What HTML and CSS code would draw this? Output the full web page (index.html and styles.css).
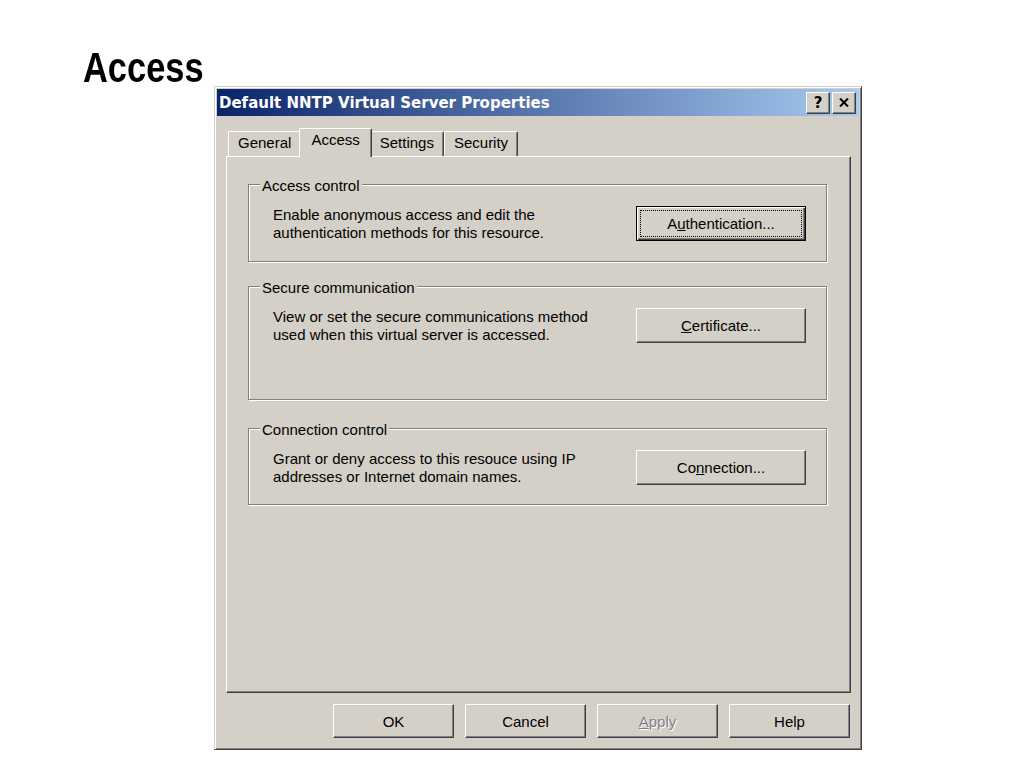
FILE: index.html
```html
<!DOCTYPE html>
<html>
<head>
  <meta charset="utf-8" />
  <title>Access</title>
  <link rel="stylesheet" href="styles.css">
</head>
<body>
<div class="slide">
  <h1 class="slide-title">Access</h1>

  <div class="dialog">
    <div class="titlebar">
      <span class="titlebar-text">Default NNTP Virtual Server Properties</span>
      <div class="caption-buttons">
        <span class="caption-btn caption-help">?</span>
        <span class="caption-btn">
          <svg width="10" height="9" viewBox="0 0 10 9">
            <path d="M1 0.5 L9 8.5 M9 0.5 L1 8.5" stroke="#000" stroke-width="2" fill="none" />
          </svg>
        </span>
      </div>
    </div>

    <div class="dialog-body">
      <div class="tabs">
        <div class="tab">General</div>
        <div class="tab tab-active">Access</div>
        <div class="tab">Settings</div>
        <div class="tab">Security</div>
      </div>

      <div class="tab-panel">
        <div class="group group-access">
          <div class="group-label">Access control</div>
          <div class="group-row">
            <p class="group-text">Enable anonymous access and edit the<br>authentication methods for this resource.</p>
            <button class="btn btn-default"><span class="focus-ring">A<u>u</u>thentication...</span></button>
          </div>
        </div>

        <div class="group group-secure">
          <div class="group-label">Secure communication</div>
          <div class="group-row">
            <p class="group-text">View or set the secure communications method<br>used when this virtual server is accessed.</p>
            <button class="btn"><u>C</u>ertificate...</button>
          </div>
        </div>

        <div class="group group-connection">
          <div class="group-label">Connection control</div>
          <div class="group-row">
            <p class="group-text">Grant or deny access to this resouce using IP<br>addresses or Internet domain names.</p>
            <button class="btn">Co<u>n</u>nection...</button>
          </div>
        </div>
      </div>

      <div class="dialog-buttons">
        <button class="btn btn-wide">OK</button>
        <button class="btn btn-wide">Cancel</button>
        <button class="btn btn-wide btn-disabled"><u>A</u>pply</button>
        <button class="btn btn-wide">Help</button>
      </div>
    </div>
  </div>
</div>
</body>
</html>
```

FILE: styles.css
```css
body {
  margin: 0;
  padding: 0;
  background: #fff;
  font-family: "Liberation Sans", Arial, sans-serif;
}
.slide {
  width: 1024px;
  height: 768px;
  overflow: hidden;
  padding-top: 49px;
  box-sizing: border-box;
}
.slide-title {
  width: fit-content;
  margin: 0 0 0 83px;
  font-family: "Liberation Sans", Arial, sans-serif;
  font-size: 42px;
  line-height: 37px;
  font-weight: 700;
  color: #000;
  /* no narrow face installed, so squeeze the regular one */
  transform: scaleX(0.82);
  transform-origin: left top;
}

/* window frame */
.dialog {
  box-sizing: border-box;
  width: 648px;
  margin-left: 214px;
  padding: 2px;
  background: #d4d0c8;
  border: 1px solid;
  border-color: #d4d0c8 #404040 #404040 #d4d0c8;
  box-shadow: inset 1px 1px #fff, inset -1px -1px #808080;
}
.titlebar {
  height: 27px;
  display: flex;
  align-items: center;
  justify-content: space-between;
  padding: 0 3px 0 2px;
  background: linear-gradient(to right, #0a246a, #a6caf0);
}
.titlebar-text {
  color: #fff;
  font-family: "DejaVu Sans", sans-serif;
  font-weight: 700;
  font-size: 15px;
  line-height: 18px;
  white-space: nowrap;
}
.caption-buttons {
  display: flex;
  gap: 2px;
}
.caption-btn {
  box-sizing: border-box;
  width: 24px;
  height: 22px;
  display: flex;
  align-items: center;
  justify-content: center;
  background: #d4d0c8;
  border: 1px solid;
  border-color: #fff #404040 #404040 #fff;
  box-shadow: inset -1px -1px #808080;
}
.caption-help {
  font-family: "DejaVu Sans", sans-serif;
  font-weight: 700;
  font-size: 15px;
  color: #000;
}

.dialog-body {
  padding: 12px 8px 9px 9px;
  font-size: 15px;
  line-height: 18px;
  color: #000;
}

/* tabs */
.tabs {
  display: flex;
  align-items: flex-end;
  height: 28px;
  padding-left: 2px;
}
.tab {
  box-sizing: border-box;
  height: 25px;
  padding: 2px 9px 0 9px;
  border: 1px solid;
  border-bottom: 0;
  border-color: #fff #404040 #fff #fff;
  border-radius: 2px 2px 0 0;
  box-shadow: inset -1px 0 #808080;
  white-space: nowrap;
}
.tab-active {
  position: relative;
  z-index: 1;
  height: 29px;
  margin: 0 -2px -1px -2px;
  padding: 2px 11px 0 11px;
  background: #d4d0c8;
}

.tab-panel {
  box-sizing: border-box;
  height: 537px;
  padding: 27px 23px 0 21px;
  border: 1px solid;
  border-color: #fff #404040 #404040 #fff;
  box-shadow: inset -1px -1px #808080;
}

/* group boxes */
.group {
  box-sizing: border-box;
  border: 1px solid #808080;
  box-shadow: inset 1px 1px #fff, 1px 1px #fff;
}
.group-access { height: 78px; }
.group-secure { height: 114px; margin-top: 24px; }
.group-connection { height: 77px; margin-top: 28px; }
.group-label {
  width: fit-content;
  margin: -8px 0 0 11px;
  padding: 0 2px;
  background: #d4d0c8;
  white-space: nowrap;
}
.group-row {
  display: flex;
  justify-content: space-between;
  align-items: flex-start;
  margin-top: 11px;
  padding: 0 20px 0 24px;
}
.group-text {
  margin: 0;
  white-space: nowrap;
}

/* push buttons */
.btn {
  box-sizing: border-box;
  width: 170px;
  height: 35px;
  padding: 0;
  display: flex;
  align-items: center;
  justify-content: center;
  font-family: "Liberation Sans", Arial, sans-serif;
  font-size: 15px;
  color: #000;
  background: #d4d0c8;
  border: 1px solid;
  border-color: #fff #404040 #404040 #fff;
  box-shadow: inset -1px -1px #808080;
}
.btn-default {
  border-color: #000;
  box-shadow: inset 1px 1px #fff, inset -1px -1px #404040, inset -2px -2px #808080;
}
.focus-ring {
  flex: 1;
  align-self: stretch;
  margin: 3px;
  display: flex;
  align-items: center;
  justify-content: center;
  border: 1px dotted #000;
}
.btn-wide {
  width: 121px;
  height: 34px;
}
.btn-disabled {
  color: #808080;
  text-shadow: 1px 1px #fff;
}

.dialog-buttons {
  display: flex;
  justify-content: flex-end;
  gap: 11px;
  margin-top: 11px;
  padding-right: 1px;
}
```
